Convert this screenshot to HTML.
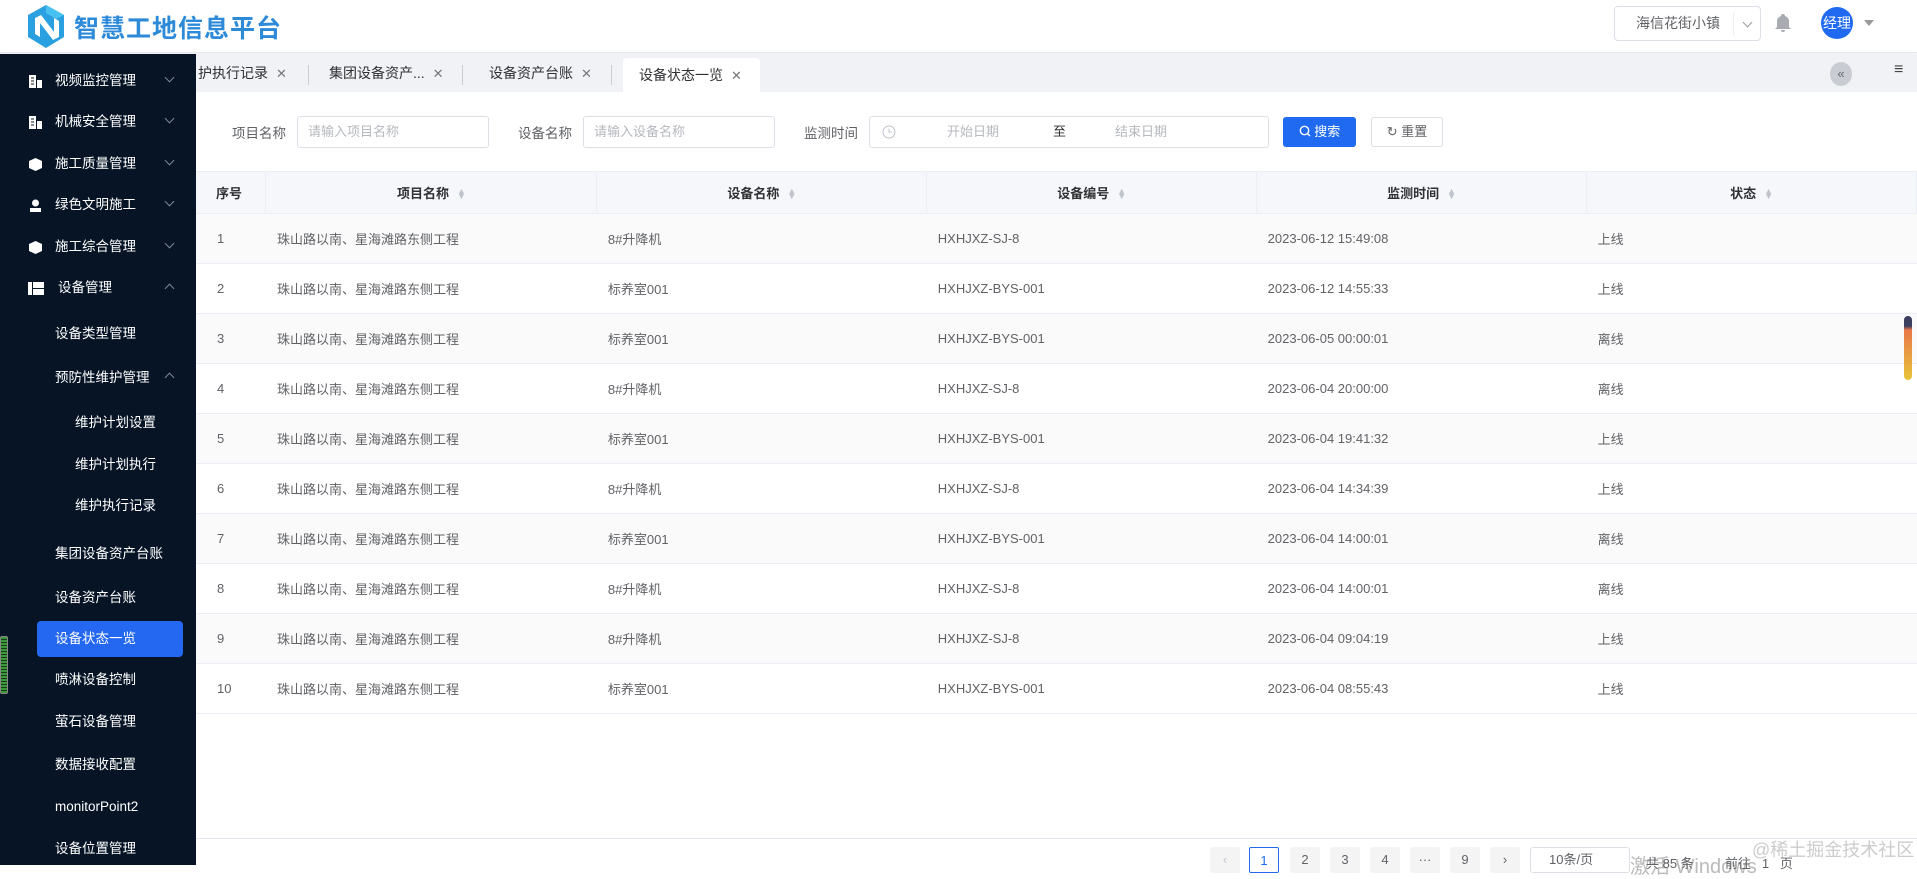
<!DOCTYPE html>
<html><head><meta charset="utf-8"><style>
*{box-sizing:border-box;margin:0;padding:0}
body{width:1917px;height:865px;overflow:hidden;background:#fff;font-family:"Liberation Sans","Noto Sans CJK SC",sans-serif;position:relative;color:#606266}
.a{position:absolute;white-space:nowrap}
#hdr{left:0;top:0;width:1917px;height:53px;background:#fff;border-bottom:1px solid #e4e7ed;box-shadow:0 1px 3px rgba(0,0,0,.08)}
#side{left:0;top:54px;width:196px;height:811px;background:#061426}
.si{position:absolute;color:#fff;font-size:13.5px;line-height:20px}
.chev{position:absolute;left:166px;width:7px;height:7px;border-right:1px solid #7d8796;border-bottom:1px solid #7d8796;transform:rotate(45deg)}
.chev.up{transform:rotate(225deg)}
.ico{position:absolute;left:29px;width:13px;height:13px}
#tabs{left:196px;top:54px;width:1721px;height:38px;background:#f0f2f5}
.tab{position:absolute;top:0;height:38px;line-height:38px;font-size:14px;color:#303133}
.x{color:#777;font-size:13px;margin-left:8px}
.sep{position:absolute;top:11px;width:1px;height:20px;background:#c8cbd0}
.lbl{position:absolute;font-size:13.5px;color:#606266;top:122px}
.inp{position:absolute;top:116px;height:32px;border:1px solid #dcdfe6;border-radius:3px;font-size:13px;color:#b5b8bd;line-height:30px;padding-left:10px;background:#fff}
table{position:absolute;left:196px;top:172px;width:1721px;border-collapse:collapse;font-size:13px}
th{height:41px;background:#f5f7fa;color:#303133;font-weight:bold;font-size:13px;border-right:1px solid #ebeef5;border-bottom:1px solid #ebeef5;text-align:center}
th.l{text-align:left;padding-left:22px}
td{height:50.1px;border-bottom:1px solid #ebeef5;padding-left:11px;color:#606266}
tr:nth-child(even) td{background:#fafafa}
.sort{display:inline-block;margin-left:8px;color:#c0c4cc;font-size:9px;line-height:5px;vertical-align:middle}
.pg{position:absolute;top:847px;height:26px;width:30px;background:#f4f4f5;border-radius:2px;text-align:center;line-height:26px;font-size:13px;color:#606266}
</style></head><body>
<div id="hdr" class="a">
<svg class="a" style="left:26px;top:4px" width="40" height="45" viewBox="0 0 40 45"><polygon points="20,1 38,11 38,33 20,44 2,33 2,11" fill="#2aa0e0"/><polygon points="9,14 15,11 28,28 28,14 33,17 33,33 27,36 14,19 14,33 9,30" fill="#fff"/><polygon points="20,1 38,11 30,15 20,9" fill="#49c1f0"/></svg>
<div class="a" style="left:74px;top:9px;font-size:25px;font-weight:bold;color:#2c8ad9;letter-spacing:1px">智慧工地信息平台</div>
<div class="a" style="left:1614px;top:6px;width:147px;height:35px;border:1px solid #dcdfe6;border-radius:4px;font-size:14px;color:#606266;line-height:33px;padding-left:21px">海信花街小镇<span style="position:absolute;left:118px;top:5px;width:1px;height:23px;background:#eee"></span><span style="position:absolute;left:129px;top:12px;width:7px;height:7px;border-right:1px solid #999;border-bottom:1px solid #999;transform:rotate(45deg)"></span></div>
<svg class="a" style="left:1775px;top:13px" width="16" height="20" viewBox="0 0 16 20"><path d="M8 1a2 2 0 0 1 2 2 5.5 5.5 0 0 1 4 5.5V14l2 2H0l2-2V8.5A5.5 5.5 0 0 1 6 3a2 2 0 0 1 2-2zM6 17h4a2 2 0 0 1-4 0z" fill="#a8abb2"/></svg>
<div class="a" style="left:1821px;top:7px;width:32px;height:32px;border-radius:50%;background:#1f6af0;color:#fff;font-size:14px;line-height:32px;text-align:center">经理</div>
<div class="a" style="left:1864px;top:20px;border-left:5px solid transparent;border-right:5px solid transparent;border-top:6px solid #999"></div>
</div>
<div id="side" class="a">
<svg class="ico" style="top:21px" viewBox="0 0 13 13"><path d="M0 0h7v13H0zM8 5h5v8H8z" fill="#fff"/><path d="M2 3h3M2 6h3M2 9h3" stroke="#061426"/></svg><div class="si" style="left:55px;top:17px">视频监控管理</div><div class="chev" style="top:20px"></div>
<svg class="ico" style="top:62px" viewBox="0 0 13 13"><path d="M0 0h7v13H0zM8 5h5v8H8z" fill="#fff"/><path d="M2 3h3M2 6h3M2 9h3" stroke="#061426"/></svg><div class="si" style="left:55px;top:58px">机械安全管理</div><div class="chev" style="top:61px"></div>
<svg class="ico" style="top:104px" viewBox="0 0 13 13"><path d="M6.5 0L13 3v7l-6.5 3L0 10V3z" fill="#fff"/></svg><div class="si" style="left:55px;top:100px">施工质量管理</div><div class="chev" style="top:103px"></div>
<svg class="ico" style="top:145px" viewBox="0 0 13 13"><circle cx="6.5" cy="4" r="3.5" fill="#fff"/><path d="M1 9h11v4H1z" fill="#fff"/></svg><div class="si" style="left:55px;top:141px">绿色文明施工</div><div class="chev" style="top:144px"></div>
<svg class="ico" style="top:187px" viewBox="0 0 13 13"><path d="M6.5 0L13 3v7l-6.5 3L0 10V3z" fill="#fff"/></svg><div class="si" style="left:55px;top:183px">施工综合管理</div><div class="chev" style="top:186px"></div>
<svg class="ico" style="top:228px;width:16px;left:28px" viewBox="0 0 16 13"><path d="M0 0h4v13H0zM5 0h11v6H5zM5 7h11v6H5z" fill="#fff"/></svg><div class="si" style="left:58px;top:224px">设备管理</div><div class="chev up" style="top:231px"></div>
<div class="si" style="left:55px;top:270px">设备类型管理</div>
<div class="si" style="left:55px;top:314px">预防性维护管理</div><div class="chev up" style="top:320px"></div>
<div class="si" style="left:75px;top:359px">维护计划设置</div>
<div class="si" style="left:75px;top:401px">维护计划执行</div>
<div class="si" style="left:75px;top:442px">维护执行记录</div>
<div class="si" style="left:55px;top:490px">集团设备资产台账</div>
<div class="si" style="left:55px;top:534px">设备资产台账</div>
<div class="a" style="left:37px;top:567px;width:146px;height:36px;background:#2468f2;border-radius:4px"></div>
<div class="si" style="left:55px;top:575px">设备状态一览</div>
<div class="si" style="left:55px;top:616px">喷淋设备控制</div>
<div class="si" style="left:55px;top:658px">萤石设备管理</div>
<div class="si" style="left:55px;top:701px">数据接收配置</div>
<div class="si" style="left:55px;top:743px">monitorPoint2</div>
<div class="si" style="left:55px;top:785px">设备位置管理</div>
<div class="a" style="left:0;top:582px;width:8px;height:58px;border:1px solid #888;border-radius:2px;background:repeating-linear-gradient(#3a9a3a 0 2px,#1c3a1c 2px 3px)"></div>
</div>
<div id="tabs" class="a">
<div class="tab" style="left:2px">护执行记录<span class="x">✕</span></div>
<div class="sep" style="left:112px"></div>
<div class="tab" style="left:133px">集团设备资产...<span class="x">✕</span></div>
<div class="sep" style="left:266px"></div>
<div class="tab" style="left:293px">设备资产台账<span class="x">✕</span></div>
<div class="sep" style="left:415px"></div>
<div class="tab" style="left:427px;top:4px;height:34px;line-height:34px;width:137px;background:#fff;border-radius:4px 4px 0 0;padding-left:16px">设备状态一览<span class="x">✕</span></div>
<div class="a" style="left:1634px;top:8px;width:22px;height:24px;border-radius:50%;background:#c9ccd3;color:#666;font-size:13px;text-align:center;line-height:23px">«</div>
<div class="a" style="left:1698px;top:7px;font-size:16px;color:#444">≡</div>
</div>
<div class="lbl" style="left:232px">项目名称</div>
<div class="inp" style="left:297px;width:192px">请输入项目名称</div>
<div class="lbl" style="left:518px">设备名称</div>
<div class="inp" style="left:583px;width:192px">请输入设备名称</div>
<div class="lbl" style="left:804px">监测时间</div>
<div class="inp" style="left:869px;width:400px;padding-left:0"><svg class="a" style="left:12px;top:8px" width="14" height="14" viewBox="0 0 14 14"><circle cx="7" cy="7" r="6" fill="none" stroke="#c0c4cc"/><path d="M7 3.5V7h3" fill="none" stroke="#c0c4cc"/></svg><span class="a" style="left:77px">开始日期</span><span class="a" style="left:183px;color:#303133">至</span><span class="a" style="left:245px">结束日期</span></div>
<div class="a" style="left:1283px;top:117px;width:73px;height:30px;background:#1f6af0;border-radius:3px;color:#fff;font-size:13px;line-height:30px;text-align:center"><svg width="12" height="12" viewBox="0 0 12 12" style="vertical-align:-1px"><circle cx="5.5" cy="5.5" r="4.2" fill="none" stroke="#fff" stroke-width="1.4"/><path d="M8.5 8.5L11 11" stroke="#fff" stroke-width="1.4"/></svg> 搜索</div>
<div class="a" style="left:1371px;top:117px;width:72px;height:30px;border:1px solid #dcdfe6;border-radius:3px;color:#606266;font-size:13px;line-height:28px;text-align:center">↻ 重置</div>
<div class="a" style="left:196px;top:171px;width:1721px;height:1px;background:#ebeef5"></div>
<table>
<colgroup><col style="width:70px"><col style="width:331px"><col style="width:330px"><col style="width:330px"><col style="width:330px"><col style="width:330px"></colgroup>
<tr><th class="l" style="padding-left:20px">序号</th><th>项目名称<span class="sort">▲<br>▼</span></th><th>设备名称<span class="sort">▲<br>▼</span></th><th>设备编号<span class="sort">▲<br>▼</span></th><th>监测时间<span class="sort">▲<br>▼</span></th><th>状态<span class="sort">▲<br>▼</span></th></tr>
<tr><td style="padding-left:21px">1</td><td>珠山路以南、星海滩路东侧工程</td><td>8#升降机</td><td>HXHJXZ-SJ-8</td><td>2023-06-12 15:49:08</td><td>上线</td></tr>
<tr><td style="padding-left:21px">2</td><td>珠山路以南、星海滩路东侧工程</td><td>标养室001</td><td>HXHJXZ-BYS-001</td><td>2023-06-12 14:55:33</td><td>上线</td></tr>
<tr><td style="padding-left:21px">3</td><td>珠山路以南、星海滩路东侧工程</td><td>标养室001</td><td>HXHJXZ-BYS-001</td><td>2023-06-05 00:00:01</td><td>离线</td></tr>
<tr><td style="padding-left:21px">4</td><td>珠山路以南、星海滩路东侧工程</td><td>8#升降机</td><td>HXHJXZ-SJ-8</td><td>2023-06-04 20:00:00</td><td>离线</td></tr>
<tr><td style="padding-left:21px">5</td><td>珠山路以南、星海滩路东侧工程</td><td>标养室001</td><td>HXHJXZ-BYS-001</td><td>2023-06-04 19:41:32</td><td>上线</td></tr>
<tr><td style="padding-left:21px">6</td><td>珠山路以南、星海滩路东侧工程</td><td>8#升降机</td><td>HXHJXZ-SJ-8</td><td>2023-06-04 14:34:39</td><td>上线</td></tr>
<tr><td style="padding-left:21px">7</td><td>珠山路以南、星海滩路东侧工程</td><td>标养室001</td><td>HXHJXZ-BYS-001</td><td>2023-06-04 14:00:01</td><td>离线</td></tr>
<tr><td style="padding-left:21px">8</td><td>珠山路以南、星海滩路东侧工程</td><td>8#升降机</td><td>HXHJXZ-SJ-8</td><td>2023-06-04 14:00:01</td><td>离线</td></tr>
<tr><td style="padding-left:21px">9</td><td>珠山路以南、星海滩路东侧工程</td><td>8#升降机</td><td>HXHJXZ-SJ-8</td><td>2023-06-04 09:04:19</td><td>上线</td></tr>
<tr><td style="padding-left:21px">10</td><td>珠山路以南、星海滩路东侧工程</td><td>标养室001</td><td>HXHJXZ-BYS-001</td><td>2023-06-04 08:55:43</td><td>上线</td></tr>
</table>
<div class="a" style="left:1904px;top:316px;width:8px;height:64px;border-radius:4px;background:linear-gradient(#3b3f60 0 10px,#e9784a 14px,#e8c43a)"></div>
<div class="a" style="left:196px;top:838px;width:1721px;height:1px;background:#e4e7ed"></div>
<div class="pg" style="left:1210px;color:#c0c4cc">‹</div>
<div class="pg" style="left:1249px;background:#fff;border:1px solid #1f6af0;color:#1f6af0">1</div>
<div class="pg" style="left:1290px">2</div>
<div class="pg" style="left:1330px">3</div>
<div class="pg" style="left:1370px">4</div>
<div class="pg" style="left:1410px">···</div>
<div class="pg" style="left:1450px">9</div>
<div class="pg" style="left:1490px">›</div>
<div class="a" style="left:1530px;top:847px;width:100px;height:26px;border:1px solid #dcdfe6;border-radius:3px;font-size:13px;line-height:24px;padding-left:18px">10条/页</div>
<div class="a" style="left:1630px;top:850px;font-size:20px;color:#bbb">激活 Windows</div>
<div class="a" style="left:1646px;top:853px;font-size:13px">共 85 条</div>
<div class="a" style="left:1725px;top:853px;font-size:13px">前往 &nbsp; 1 &nbsp; 页</div>
<div class="a" style="left:1752px;top:836px;font-size:18px;color:#ccc">@稀土掘金技术社区</div>
</body></html>
